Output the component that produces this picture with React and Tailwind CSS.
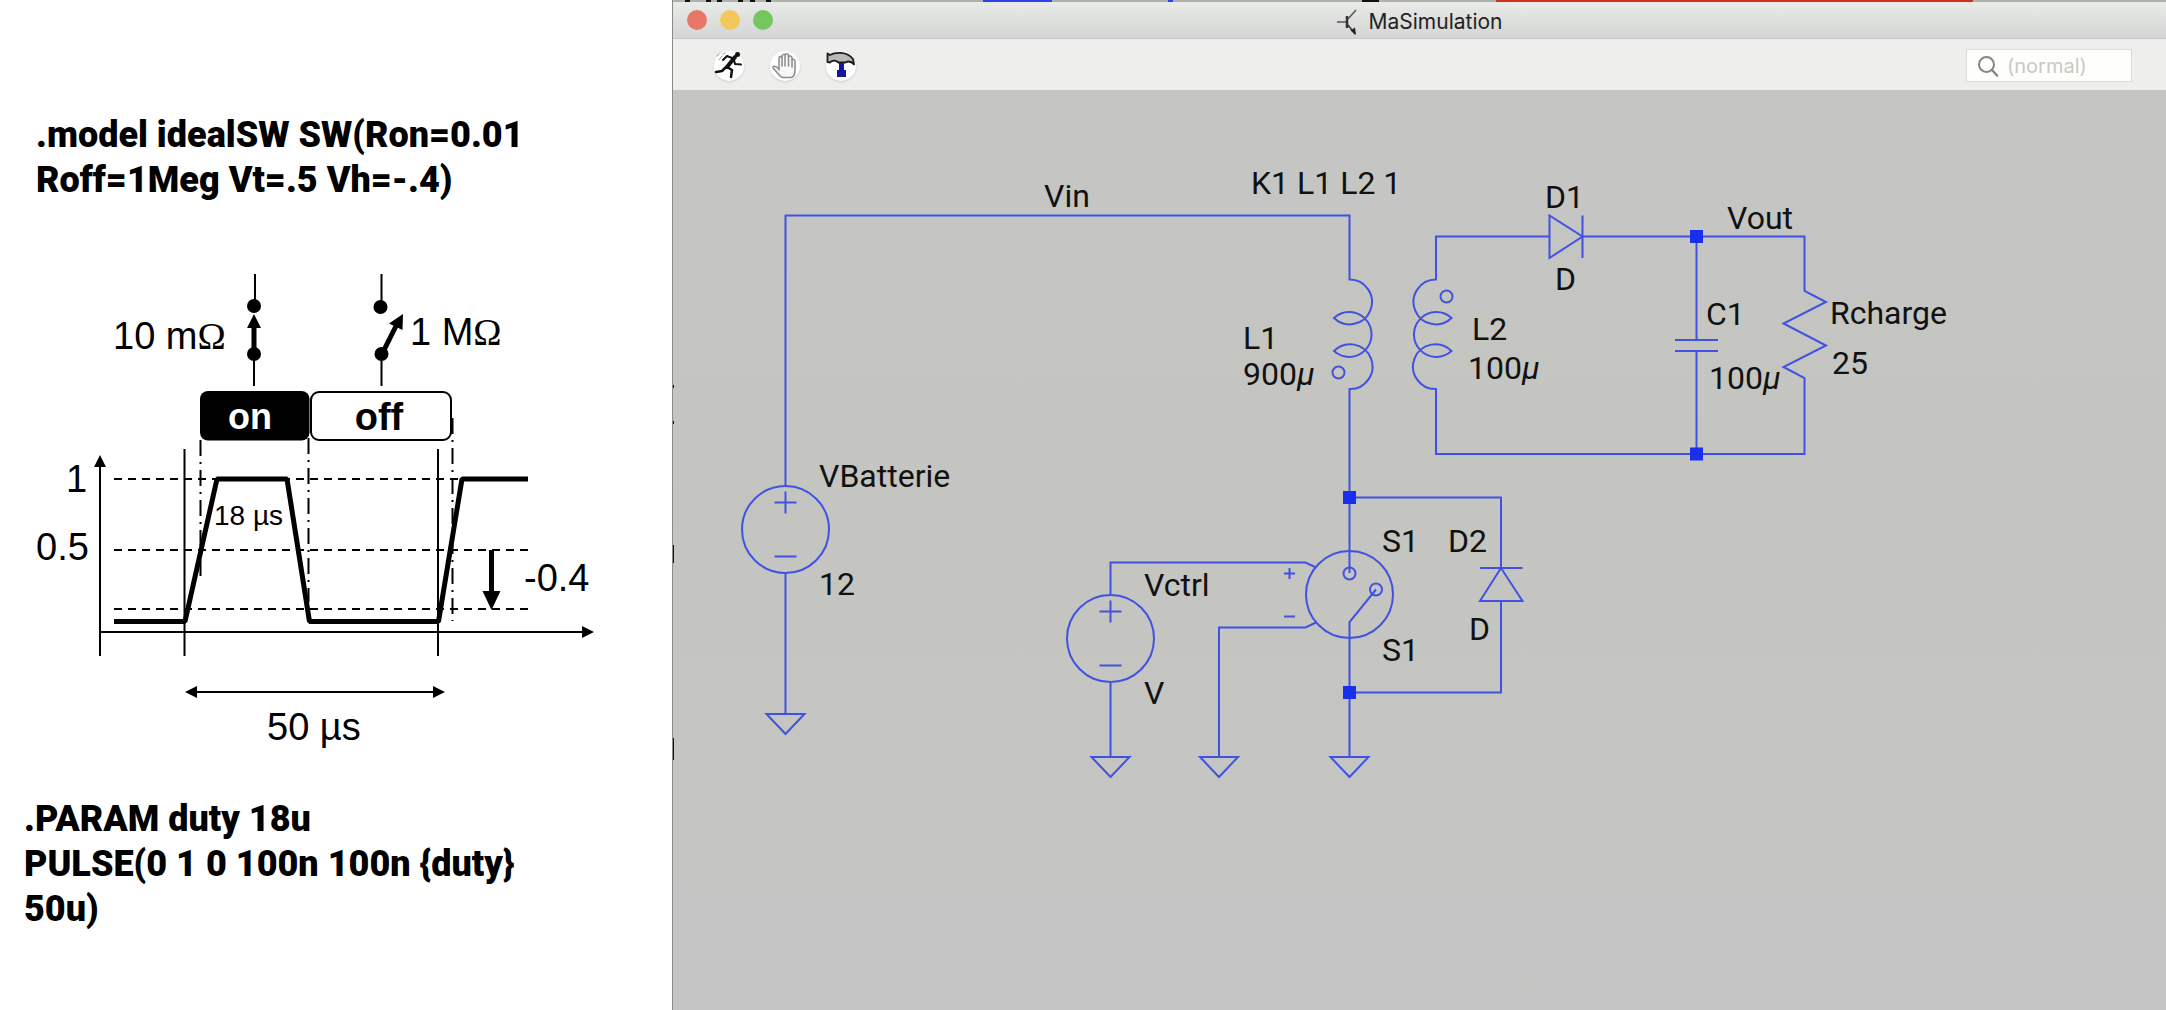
const BLUE = "#4152e2";
const INK = "#111111";

function Heading({ lines }) {
  return (
    <p className="font-['Roboto'] text-[36px] leading-[45px] font-black whitespace-nowrap text-black">
      {lines.map((l) => (
        <span key={l} className="block">{l}</span>
      ))}
    </p>
  );
}

function Waveform() {
  return (
    <svg viewBox="0 260 672 500" className="block w-full" role="img" aria-label="Switch control waveform">
      <g stroke="#000" strokeWidth="2" fill="none">
        <path d="M255 274V306M254 354V386M381.5 274V306M381.5 354V386" />
        <path d="M100 460V656M100 632H584M184.500 449V656M438 449V656M192 692H438" />
        <path d="M114 479H528M114 550H528M114 609H528" strokeDasharray="8 6" />
        <path d="M200.500 440V578M308.500 438V602M452.500 418V621" strokeDasharray="16 6 2 6" />
        <path d="M114 621.500H185L217 479H287L309.500 621.500H438.500L462 479H528" strokeWidth="5" strokeLinejoin="bevel" />
        <path d="M254 354V326M382 354L397 324M491.500 550V593" strokeWidth="5" />
      </g>
      <g fill="#000">
        <circle cx="254" cy="306" r="7" />
        <circle cx="254" cy="354" r="7" />
        <circle cx="380.5" cy="307" r="7" />
        <circle cx="381.5" cy="354" r="7" />
        <path d="M254 314L261 328H247ZM403 314L402.500 330L389 323.500ZM491.500 610L482.500 591H500.500Z" />
        <path d="M100 455L94 467H106ZM594 632L582 626V638ZM185 692L197 686V698ZM445 692L433 686V698Z" />
        <rect x="200" y="391" width="109.500" height="49.500" rx="8" />
      </g>
      <rect x="311" y="392" width="140" height="48" rx="8" fill="#fff" stroke="#000" strokeWidth="2" />
      <g className="font-['Liberation_Sans'] text-[38px]" fill="#000">
        <text x="113" y="349">10 m<tspan className="font-['Liberation_Serif']">Ω</tspan></text>
        <text x="410" y="345">1 M<tspan className="font-['Liberation_Serif']">Ω</tspan></text>
        <text x="66" y="492">1</text>
        <text x="36" y="560">0.5</text>
        <text x="524" y="591">-0.4</text>
        <text x="267" y="740">50 µs</text>
        <text x="214" y="525" className="text-[28px]">18 µs</text>
        <text x="250" y="429" textAnchor="middle" fill="#fff" className="text-[36px] font-bold">on</text>
        <text x="379" y="430" textAnchor="middle" className="text-[38px] font-bold">off</text>
      </g>
    </svg>
  );
}

function Source({ x, y }) {
  return (
    <g>
      <circle cx={x} cy={y} r="43.5" />
      <path d={`M${x - 11} ${y - 27}h22M${x} ${y - 38}v22M${x - 11} ${y + 27}h22`} />
    </g>
  );
}

function Ground({ x, y }) {
  return <path d={`M${x - 19} ${y}h38l-19 20z`} />;
}

function Node({ x, y }) {
  return <rect x={x - 6.5} y={y - 6.5} width="13" height="13" fill="#1a2fee" stroke="none" />;
}

const MU = <tspan fontStyle="italic">µ</tspan>;

function Schematic() {
  return (
    <svg viewBox="673 90 1493 920" className="block w-full" role="img" aria-label="Flyback converter schematic">
      <path d="M673 385v3M673 421v3M673 545v18M673 738v22" stroke="#111" strokeWidth="2" />
      <g stroke={BLUE} strokeWidth="2" fill="none">
        <path d="M785.500 486V215.500H1349.500V279.500A22.400 22.400 0 1 1 1334 318A22.400 22.400 0 1 1 1334 351A22.400 22.400 0 1 1 1349.500 389V573" />
        <path d="M1549.500 236.500H1436V279.500A22.400 22.400 0 1 0 1451.500 318A22.400 22.400 0 1 0 1451.500 351A22.400 22.400 0 1 0 1436 389V454H1804.500V378L1783.500 367L1826 345.500L1783.500 323.500L1826 302L1804.500 291V236.500H1582.500" />
        <circle cx="1338.500" cy="372.500" r="6" />
        <circle cx="1446.500" cy="296.500" r="6" />
        <path d="M1549.500 215.500V258L1582.500 236.500ZM1582.500 215.500V258" />
        <path d="M1696.500 236.500V340M1696.500 351V454M1675 340H1718M1675 351H1718" />
        <path d="M785.500 574V714M1110.500 594V562.500H1305.500L1316 567.500M1110.500 683V757M1316 622.500L1305.500 627.500H1219V757" />
        <path d="M1349.500 497.500H1501V568M1501 601V692.500H1349.500M1349.500 757V622L1376 589.500" />
        <path d="M1480 568H1522.500M1501 568L1480 601H1522.500Z" />
        <circle cx="1349.500" cy="594.500" r="43.5" />
        <circle cx="1349.500" cy="573.500" r="6" />
        <circle cx="1376" cy="589.500" r="6" />
        <path d="M1284 573.500H1295M1289.500 568V579M1284 616.500H1295" />
        <Source x={785.5} y={529.5} />
        <Source x={1110.5} y={638.5} />
        <Ground x={785.5} y={714} />
        <Ground x={1110.5} y={757} />
        <Ground x={1219} y={757} />
        <Ground x={1349.5} y={757} />
        <Node x={1696.5} y={236.5} />
        <Node x={1696.5} y={454} />
        <Node x={1349.5} y={497.5} />
        <Node x={1349.5} y={692.5} />
      </g>
      <g className="font-['Roboto'] text-[32px]" fill={INK}>
        <text x="1044" y="207">Vin</text>
        <text x="1251" y="194">K1 L1 L2 1</text>
        <text x="1545" y="208">D1</text>
        <text x="1555" y="290">D</text>
        <text x="1727" y="229">Vout</text>
        <text x="1706" y="325">C1</text>
        <text x="1709" y="389">100{MU}</text>
        <text x="1830" y="324">Rcharge</text>
        <text x="1832" y="374">25</text>
        <text x="1243" y="349">L1</text>
        <text x="1243" y="385">900{MU}</text>
        <text x="1472" y="340">L2</text>
        <text x="1468" y="379">100{MU}</text>
        <text x="819" y="487">VBatterie</text>
        <text x="819" y="595">12</text>
        <text x="1144" y="596">Vctrl</text>
        <text x="1144" y="704">V</text>
        <text x="1382" y="552">S1</text>
        <text x="1382" y="661">S1</text>
        <text x="1448" y="552">D2</text>
        <text x="1469" y="640">D</text>
      </g>
    </svg>
  );
}

function ToolButton({ label, children }) {
  return (
    <button type="button" aria-label={label} className="flex size-[30px] items-center justify-center rounded-full bg-white shadow-sm">
      {children}
    </button>
  );
}

function RunnerIcon() {
  return (
    <svg viewBox="0 0 30 30" className="size-[30px]" fill="none" stroke="#111" strokeLinecap="round" strokeLinejoin="round">
      <path d="M21 6L13 16" strokeWidth="4" />
      <circle cx="23.500" cy="3.500" r="2.500" fill="#111" stroke="none" />
      <path d="M20 9L21 13L27 13.500M18 7L13 5L9 9" strokeWidth="2" />
      <path d="M12 16L8 20L2 21M13 16L18 19L17 26" strokeWidth="2.500" />
      <path d="M3 5L5 3M5 9L8 5M9 3L11 2" stroke="#999" strokeWidth="1" />
    </svg>
  );
}

function HandIcon() {
  return (
    <svg viewBox="0 0 30 30" className="size-[30px]" fill="#f7f7f5" stroke="#8b8b8b" strokeWidth="1.500" strokeLinecap="round" strokeLinejoin="round">
      <path d="M9 19V7C9 5 12 5 12 7V5C12 3 15 3 15 4.500C15 2 18.500 2 18.500 4.500V6C18.500 4.500 22 4.500 22 7V9C22 8 25 8 25 10V20C25 24 23 26.500 21 26.500H13C10 26.500 8 22 3 17C2.500 15 5 14 9 18Z" />
      <path d="M12 7V15M15 5V15M18.500 6V15M22 9V16" fill="none" />
    </svg>
  );
}

function HammerIcon() {
  return (
    <svg viewBox="0 0 30 30" className="size-[30px]">
      <path d="M1.500 2.500L4 4C9 1 21 0 27 8L28 13.500C25 10 22 10 19.500 11.500H12.500C10 9 6 9 4 11.500L1.500 11Z" fill="#b9b9b9" stroke="#1c1c1c" strokeWidth="1.800" strokeLinejoin="round" />
      <path d="M13 12H18V19H20V26H11V19H13Z" fill="#14149c" />
    </svg>
  );
}

function TransistorIcon() {
  return (
    <svg viewBox="0 0 20 28" className="h-7 w-5" fill="none" stroke="#555" strokeWidth="1.500">
      <path d="M0 14H9M19 2L11 11" />
      <path d="M10 8V20" strokeWidth="2.500" stroke="#333" />
      <path d="M11 17L18 26" stroke="#333" />
      <path d="M19 27L13.500 22.500L18 19.500Z" fill="#222" stroke="none" />
    </svg>
  );
}

function BackdropStrip() {
  return (
    <svg viewBox="673 0 1493 2" className="block w-full" aria-hidden="true">
      <rect x="673" width="1493" height="2" fill="#aeb1ac" />
      <path d="M685 1h5M706 1h5M717 1h5M738 1h5M750 1h5M766 1h5M1362 1h17" stroke="#111" strokeWidth="2" />
      <path d="M983 1h69M1168 1h5" stroke="#3340ee" strokeWidth="2" />
      <path d="M1496 1h477" stroke="#d1321c" strokeWidth="2" />
    </svg>
  );
}

export default function App() {
  return (
    <div className="flex min-h-screen bg-white">
      <section className="w-[672px] shrink-0 pt-[113px]">
        <div className="pl-9"><Heading lines={[".model idealSW SW(Ron=0.01", "Roff=1Meg Vt=.5 Vh=-.4)"]} /></div>
        <div className="pt-[57px]"><Waveform /></div>
        <div className="pt-[37px] pl-6"><Heading lines={[".PARAM duty 18u", "PULSE(0 1 0 100n 100n {duty}", "50u)"]} /></div>
      </section>
      <main className="flex min-w-0 flex-1 flex-col border-l border-[#8a8a8a] bg-[#c5c5c4]">
        <BackdropStrip />
        <header className="grid h-[37px] grid-cols-[1fr_auto_1fr] items-center border-b border-[#c6c6c6] bg-linear-to-b from-[#e8ebe8] to-[#d4d5d4] px-[14px]">
          <div className="flex gap-[13px]">
            <button type="button" aria-label="Close" className="size-5 rounded-full bg-[#e8776a]" />
            <button type="button" aria-label="Minimize" className="size-5 rounded-full bg-[#f2c85c]" />
            <button type="button" aria-label="Zoom" className="size-5 rounded-full bg-[#72c85e]" />
          </div>
          <div className="flex items-center gap-3 pt-1">
            <TransistorIcon />
            <h1 className="font-['Inter'] text-[21px] leading-7 text-[#222]">MaSimulation</h1>
          </div>
        </header>
        <div className="flex h-[51px] items-center justify-between bg-[#eeeeec] pt-[2px] pr-[34px] pl-[41px]">
          <div className="flex gap-[26px]">
            <ToolButton label="Run"><RunnerIcon /></ToolButton>
            <ToolButton label="Halt"><HandIcon /></ToolButton>
            <ToolButton label="Control panel"><HammerIcon /></ToolButton>
          </div>
          <label className="flex h-[33px] w-[166px] items-center gap-2 border border-[#dcdcda] bg-[#fefffb] pl-[10px]">
            <svg viewBox="0 0 22 22" className="size-[22px] shrink-0" fill="none" stroke="#858585" strokeWidth="2" strokeLinecap="round">
              <circle cx="9.500" cy="9.500" r="7.500" />
              <path d="M15 15L20 20.500" strokeWidth="2.500" />
            </svg>
            <input type="text" aria-label="Search" placeholder="(normal)" className="w-full min-w-0 bg-transparent font-['Inter'] text-[20px] text-[#333] outline-none placeholder:text-[#c9c9c5]" />
          </label>
        </div>
        <div className="flex-1 bg-linear-to-b from-[#c5c5c4] via-[#c4c5c0] via-45% to-[#c5c5c5]">
          <Schematic />
        </div>
      </main>
    </div>
  );
}
